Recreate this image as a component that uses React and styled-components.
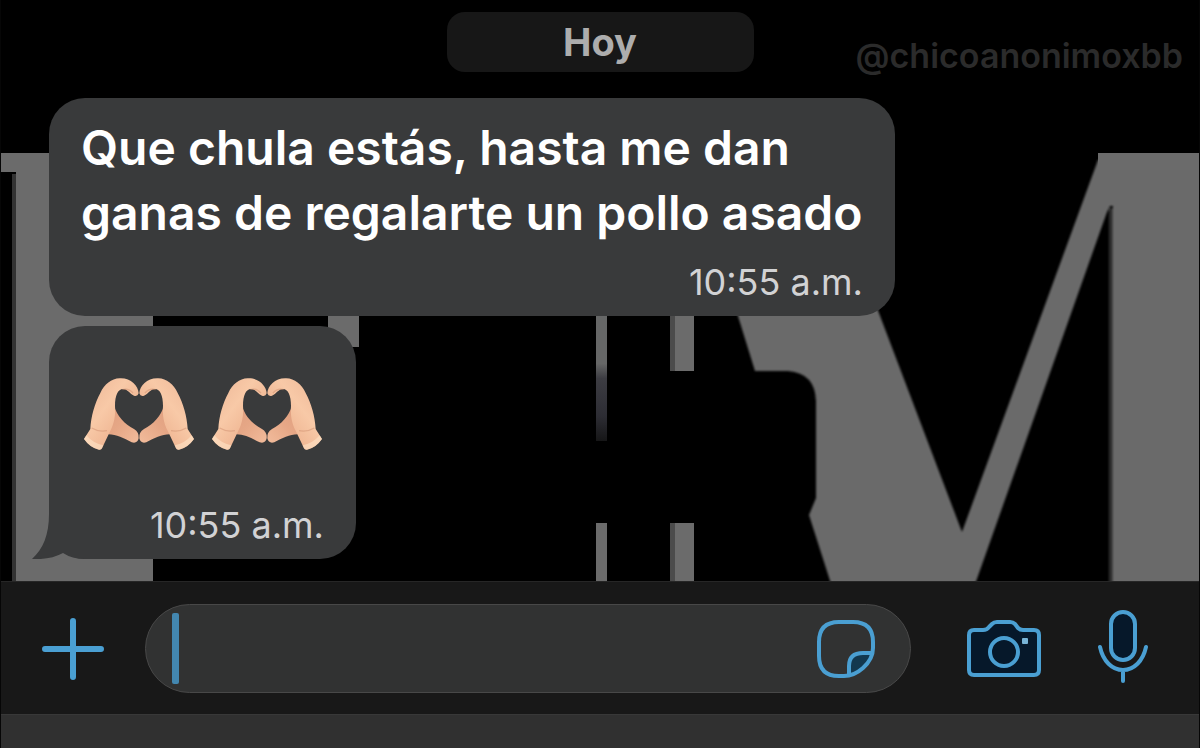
import React from 'react';
import styled, { createGlobalStyle } from 'styled-components';

const GlobalStyle = createGlobalStyle`
  * { box-sizing: border-box; }
  body {
    margin: 0;
    background: #000;
    font-family: Inter, "Liberation Sans", sans-serif;
  }
`;

const Page = styled.div`
  display: flex;
  flex-direction: column;
  min-height: 100vh;
  border: solid #060606;
  border-width: 0 1px;
`;

const Chat = styled.main`
  position: relative;
  z-index: 0;
  flex: 1;
  overflow: hidden;
  padding: 12px 16px 22px 48px;
  background: #000;
`;

const Wallpaper = styled.svg`
  position: absolute;
  inset: 0;
  z-index: -1;
  width: 100%;
  height: 100%;
`;

const TopRow = styled.header`
  display: grid;
  grid-template-columns: 1fr auto 1fr;
  align-items: start;
  margin-left: -32px;
  margin-bottom: 26px;
`;

const DayPill = styled.time`
  grid-column: 2;
  width: 307px;
  border-radius: 18px;
  background: #171717;
  color: #adadad;
  font-size: 38px;
  font-weight: 700;
  line-height: 60px;
  text-align: center;
`;

const Handle = styled.span`
  justify-self: end;
  padding-top: 28px;
  color: #2b2b2b;
  font-size: 34px;
  font-weight: 600;
  line-height: 32px;
`;

const Messages = styled.section`
  display: flex;
  flex-direction: column;
  align-items: flex-start;
  gap: 10px;
`;

const Bubble = styled.article`
  position: relative;
  padding: 17px 32px 14px;
  border-radius: 36px;
  background: #393a3b;
`;

const BubbleText = styled.p`
  max-width: 782px;
  margin: 0;
  color: #fff;
  font-size: 48px;
  font-weight: 600;
  line-height: 65px;
`;

const EmojiRow = styled.div`
  display: flex;
  align-items: center;
  gap: 13px;
  height: 145px;
  padding-bottom: 4px;
`;

const Stamp = styled.time`
  display: block;
  margin-top: 17px;
  color: #d2d2d4;
  font-size: 36px;
  line-height: 40px;
  text-align: right;
`;

const Tail = styled.svg`
  position: absolute;
  left: -17px;
  bottom: 0;
`;

const Composer = styled.form`
  display: flex;
  align-items: center;
  padding: 22px 51px 21px 41px;
  border-top: 1px solid #262626;
  background: #181818;
`;

const IconButton = styled.button`
  display: flex;
  flex: none;
  margin: 0 0 0 ${(p) => p.$gap || 0}px;
  padding: 0;
  border: 0;
  background: none;
  color: #4a9fd2;
  cursor: pointer;
`;

const Field = styled.label`
  display: flex;
  flex: 1;
  align-items: center;
  min-width: 0;
  height: 89px;
  margin-left: 41px;
  padding: 0 35px 0 26px;
  border: 1px solid #484848;
  border-radius: 45px;
  background: #313232;
`;

const Caret = styled.span`
  width: 7px;
  height: 71px;
  border-radius: 2px;
  background: #4387b0;
`;

const Input = styled.input`
  flex: 1;
  min-width: 0;
  border: 0;
  outline: 0;
  background: none;
  color: #fff;
  font: 500 48px Inter, sans-serif;
  caret-color: transparent;
`;

const BottomStrip = styled.footer`
  height: 34px;
  border-top: 1px solid #383838;
  background: #303030;
`;

function Backdrop() {
  return (
    <Wallpaper viewBox="1 0 1198 581" preserveAspectRatio="none" aria-hidden="true">
      <defs>
        <filter id="soft" x="-5%" y="-5%" width="110%" height="110%">
          <feGaussianBlur stdDeviation="1" />
        </filter>
        <linearGradient id="fade" x1="0" y1="0" x2="0" y2="1">
          <stop offset="0.38" stopColor="#666767" />
          <stop offset="0.5" stopColor="#3c3c42" />
          <stop offset="0.8" stopColor="#2d2d34" />
          <stop offset="1" stopColor="#161617" />
        </linearGradient>
      </defs>
      <g fill="#6b6b6b">
        <path d="M1 153H153V581H16V172H1Z" />
        <path fill="#333" d="M12 174H16V581H12Z" />
        <path d="M328 300V328L340 347H359V300Z" />
        <path fill="url(#fade)" d="M596 316H607V441H596Z" />
        <path d="M596 523H607V581H596Z" />
        <path d="M670 300H694V371H670ZM670 523H694V581H670Z" />
        <path fill="#4b4b4b" d="M670 300H675V371H670ZM670 523H675V581H670Z" />
      </g>
      <g fill="#6b6b6b" filter="url(#soft)">
        <path d="M733 300L755 371H788Q815 373 816 401V498L809 515L833 590H973L1107 212L1110 206H1113V590H1210V160H1098L962 532L874 300Z" />
        <path fill="#333" d="M1109 208H1113V590H1109Z" />
      </g>
      <path fill="#6b6b6b" d="M1098 153H1199V170H1098Z" />
    </Wallpaper>
  );
}

function Hand({ flip }) {
  return (
    <g transform={flip ? 'translate(416 0) scale(-1 1)' : undefined}>
      <path
        fill="url(#thumb)"
        d="M134 138C141 166 165 192 193 206Q209 216 207 234Q203 251 186 246C163 234 140 222 116 222L100 200Z"
      />
      <path
        fill="url(#skin)"
        d="M43 236L62 206C64 168 75 130 92 98C104 72 125 55 150 54C182 52 206 76 207 99Q204 109 193 106C178 99 175 87 160 86C145 86 136 105 136 137C138 163 134 190 122 211L97 264Q95 269 88 268Q62 263 43 236Z"
      />
      <path fill="none" stroke="#cf8f70" strokeWidth="4" opacity="0.5" d="M158 88Q176 82 190 98M66 203Q88 216 112 211" />
      <path fill="#ffe4c8" opacity="0.6" d="M43 236L50 225Q70 249 101 255L97 264Q95 269 88 268Q62 263 43 236Z" />
    </g>
  );
}

function HeartHands() {
  return (
    <svg width="115" height="74" viewBox="34 50 345 222" role="img" aria-label="Manos formando un corazón">
      <defs>
        <linearGradient id="skin" x1="0" y1="0" x2="1" y2="1">
          <stop offset="0" stopColor="#ecb595" />
          <stop offset="0.4" stopColor="#f8c9a7" />
          <stop offset="0.7" stopColor="#efb592" />
          <stop offset="1" stopColor="#e5a583" />
        </linearGradient>
        <linearGradient id="thumb" x1="0" y1="0" x2="1" y2="1">
          <stop offset="0" stopColor="#dd9d7e" />
          <stop offset="0.5" stopColor="#e6a786" />
          <stop offset="1" stopColor="#f2bc9c" />
        </linearGradient>
      </defs>
      <Hand />
      <Hand flip />
    </svg>
  );
}

const line = {
  fill: 'none',
  stroke: 'currentColor',
  strokeWidth: 4,
  strokeLinecap: 'round',
  strokeLinejoin: 'round',
  'aria-hidden': true,
};

export default function App() {
  return (
    <>
      <GlobalStyle />
      <Page>
        <Chat>
          <Backdrop />
          <TopRow>
            <DayPill>Hoy</DayPill>
            <Handle>@chicoanonimoxbb</Handle>
          </TopRow>
          <Messages>
            <Bubble>
              <BubbleText>Que chula estás, hasta me dan ganas de regalarte un pollo asado</BubbleText>
              <Stamp>10:55 a.m.</Stamp>
            </Bubble>
            <Bubble>
              <Tail width="53" height="45" viewBox="32 514 53 45" aria-hidden="true">
                <path fill="#393a3b" d="M49 514C49 535 43 549 32 559Q50 560 63 553Q72 559 85 559V514Z" />
              </Tail>
              <EmojiRow>
                <HeartHands />
                <HeartHands />
              </EmojiRow>
              <Stamp>10:55 a.m.</Stamp>
            </Bubble>
          </Messages>
        </Chat>
        <Composer onSubmit={(e) => e.preventDefault()}>
          <IconButton type="button" aria-label="Adjuntar">
            <svg {...line} width="62" height="62" viewBox="0 0 62 62" strokeWidth="6">
              <path d="M31 3V59M3 31H59" />
            </svg>
          </IconButton>
          <Field>
            <Caret />
            <Input type="text" aria-label="Mensaje" />
            <IconButton type="button" aria-label="Stickers">
              <svg {...line} width="58" height="58" viewBox="0 0 58 58">
                <path fill="#12384f" stroke="none" d="M32 56V44Q34 33 45 33H56Q54 42 46 49Q39 55 32 56Z" />
                <path d="M22 2H36Q56 2 56 22V28Q56 39 46 48Q37 56 27 56H22Q2 56 2 36V22Q2 2 22 2Z" />
                <path d="M32 55V46Q32 33 46 33H55" />
              </svg>
            </IconButton>
          </Field>
          <IconButton type="button" aria-label="Cámara" $gap={56}>
            <svg {...line} width="74" height="58" viewBox="0 0 74 58">
              <path
                fill="#06182a"
                d="M7 10H16Q20 10 22 7L25 4Q27 2 30 2H43Q46 2 48 4L51 8Q53 10 56 10H67Q72 10 72 15V50Q72 55 67 55H7Q2 55 2 50V15Q2 10 7 10Z"
              />
              <circle cx="37" cy="32" r="14" />
              <rect x="55" y="18" width="6" height="6" rx="1" fill="#78b4d6" stroke="none" />
            </svg>
          </IconButton>
          <IconButton type="button" aria-label="Grabar audio" $gap={57}>
            <svg {...line} width="50" height="80" viewBox="0 0 50 80">
              <rect x="13" y="3" width="24" height="48" rx="12" fill="#06182a" />
              <path d="M2 38C5 52 14 61 25 61S45 52 48 38M25 61V72" />
            </svg>
          </IconButton>
        </Composer>
        <BottomStrip />
      </Page>
    </>
  );
}
